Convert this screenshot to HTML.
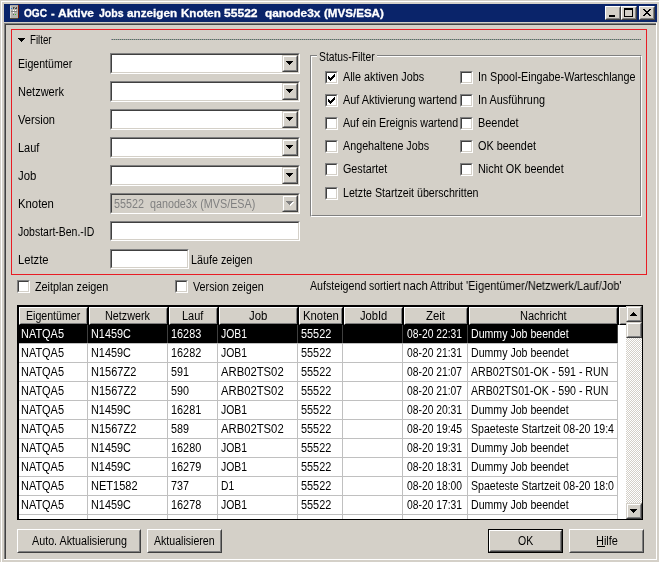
<!DOCTYPE html><html><head><meta charset="utf-8"><title>OGC</title><style>
*{box-sizing:border-box;margin:0;padding:0}
html,body{width:659px;height:562px;overflow:hidden;background:#d4d0c8}
body{position:relative;font-family:"Liberation Sans",sans-serif;font-size:12px;color:#000;line-height:13px}
.a{position:absolute}
.t{position:absolute;white-space:pre;transform-origin:0 0;line-height:13px;height:13px}
.sunk{position:absolute;background:#fff;border:1px solid;border-color:#808080 #fff #fff #808080}
.sunk:before{content:"";position:absolute;left:0;top:0;right:0;bottom:0;border:1px solid;border-color:#404040 #d4d0c8 #d4d0c8 #404040}
.cbtn{position:absolute;right:1px;top:1px;width:16px;height:17px;background:#d4d0c8;border:1px solid;border-color:#d4d0c8 #404040 #404040 #d4d0c8}
.cbtn:before{content:"";position:absolute;left:0;top:0;right:0;bottom:0;border:1px solid;border-color:#fff #808080 #808080 #fff}
.btn{position:absolute;background:#d4d0c8;border:1px solid;border-color:#fff #404040 #404040 #fff}
.btn:before{content:"";position:absolute;left:0;top:0;right:0;bottom:0;border:1px solid;border-color:#d4d0c8 #808080 #808080 #d4d0c8}
.hd{position:absolute;top:307px;height:18px;background:#d4d0c8;border:1px solid;border-color:#fff #000 #000 #fff}
.hd:before{content:"";position:absolute;left:0;top:0;right:0;bottom:0;border:1px solid;border-color:#d4d0c8 #808080 #808080 #d4d0c8}
.sb{position:absolute;left:626px;width:16px;height:16px;background:#d4d0c8;border:1px solid;border-color:#d4d0c8 #404040 #404040 #d4d0c8}
.sb:before{content:"";position:absolute;left:0;top:0;right:0;bottom:0;border:1px solid;border-color:#fff #808080 #808080 #fff}
</style></head><body><div id="w" style="position:absolute;left:0;top:0;width:659px;height:562px;will-change:transform">
<div class="a" style="left:1px;top:1px;width:658px;height:1px;background:#fff"></div>
<div class="a" style="left:1px;top:1px;width:1px;height:561px;background:#fff"></div>
<div class="a" style="left:4px;top:4px;width:653px;height:18px;background:#0a246a"></div>
<svg class="a" style="left:10px;top:5px" width="9" height="14" viewBox="0 0 9 14" shape-rendering="crispEdges"><rect width="8" height="13" fill="#b4b2ae"/><rect width="1" height="13" fill="#d8d6d2"/><rect width="8" height="1" fill="#a8a6a2"/><rect x="8" width="1" height="13" fill="#7a1c08"/><rect y="13" width="8" height="1" fill="#50483c"/><rect x="1" y="3" width="1" height="1" fill="#1c7ce0"/><rect x="3" y="2" width="1" height="2" fill="#484848"/><rect x="5" y="3" width="1" height="1" fill="#484848"/><rect x="6" y="2" width="1" height="2" fill="#484848"/><rect x="4" y="2" width="1" height="1" fill="#787878"/><rect x="3" y="5" width="1" height="1" fill="#fff"/><rect x="5" y="5" width="1" height="1" fill="#fff"/><rect x="1" y="6" width="6" height="1" fill="#808080"/><rect x="3" y="7" width="1" height="1" fill="#fff"/><rect x="3" y="9" width="1" height="1" fill="#606060"/><rect x="5" y="9" width="1" height="1" fill="#30d020"/></svg>
<div class="t" style="left:24.00px;top:7px;color:#fff;font-size:11px;font-weight:bold;-webkit-text-stroke:0.3px;transform:scaleX(0.9200);">OGC</div>
<div class="t" style="left:51.00px;top:7px;color:#fff;font-size:11px;font-weight:bold;-webkit-text-stroke:0.3px;transform:scaleX(1.0000);">-</div>
<div class="t" style="left:58.00px;top:7px;color:#fff;font-size:11px;font-weight:bold;-webkit-text-stroke:0.3px;transform:scaleX(1.0909);">Aktive</div>
<div class="t" style="left:99.00px;top:7px;color:#fff;font-size:11px;font-weight:bold;-webkit-text-stroke:0.3px;transform:scaleX(0.9600);">Jobs</div>
<div class="t" style="left:127.00px;top:7px;color:#fff;font-size:11px;font-weight:bold;-webkit-text-stroke:0.3px;transform:scaleX(1.0638);">anzeigen</div>
<div class="t" style="left:181.00px;top:7px;color:#fff;font-size:11px;font-weight:bold;-webkit-text-stroke:0.3px;transform:scaleX(1.0526);">Knoten</div>
<div class="t" style="left:224.00px;top:7px;color:#fff;font-size:11px;font-weight:bold;-webkit-text-stroke:0.3px;transform:scaleX(1.0968);">55522</div>
<div class="t" style="left:265.00px;top:7px;color:#fff;font-size:11px;font-weight:bold;-webkit-text-stroke:0.3px;transform:scaleX(1.0784);">qanode3x</div>
<div class="t" style="left:324.00px;top:7px;color:#fff;font-size:11px;font-weight:bold;-webkit-text-stroke:0.3px;transform:scaleX(1.0526);">(MVS/ESA)</div>
<div class="btn" style="left:605px;top:6px;width:16px;height:14px"><div class="a" style="left:3px;top:8px;width:6px;height:2px;background:#000"></div></div>
<div class="btn" style="left:621px;top:6px;width:16px;height:14px"><div class="a" style="left:2px;top:1px;width:9px;height:9px;border:1px solid #000;border-top-width:2px"></div></div>
<div class="btn" style="left:639px;top:6px;width:16px;height:14px"><div class="a" style="left:3px;top:2px;width:1px;height:1px;background:#000"></div><div class="a" style="left:4px;top:2px;width:1px;height:1px;background:#000"></div><div class="a" style="left:9px;top:2px;width:1px;height:1px;background:#000"></div><div class="a" style="left:10px;top:2px;width:1px;height:1px;background:#000"></div><div class="a" style="left:4px;top:3px;width:1px;height:1px;background:#000"></div><div class="a" style="left:5px;top:3px;width:1px;height:1px;background:#000"></div><div class="a" style="left:8px;top:3px;width:1px;height:1px;background:#000"></div><div class="a" style="left:9px;top:3px;width:1px;height:1px;background:#000"></div><div class="a" style="left:5px;top:4px;width:1px;height:1px;background:#000"></div><div class="a" style="left:6px;top:4px;width:1px;height:1px;background:#000"></div><div class="a" style="left:7px;top:4px;width:1px;height:1px;background:#000"></div><div class="a" style="left:8px;top:4px;width:1px;height:1px;background:#000"></div><div class="a" style="left:6px;top:5px;width:1px;height:1px;background:#000"></div><div class="a" style="left:7px;top:5px;width:1px;height:1px;background:#000"></div><div class="a" style="left:5px;top:6px;width:1px;height:1px;background:#000"></div><div class="a" style="left:6px;top:6px;width:1px;height:1px;background:#000"></div><div class="a" style="left:7px;top:6px;width:1px;height:1px;background:#000"></div><div class="a" style="left:8px;top:6px;width:1px;height:1px;background:#000"></div><div class="a" style="left:4px;top:7px;width:1px;height:1px;background:#000"></div><div class="a" style="left:5px;top:7px;width:1px;height:1px;background:#000"></div><div class="a" style="left:8px;top:7px;width:1px;height:1px;background:#000"></div><div class="a" style="left:9px;top:7px;width:1px;height:1px;background:#000"></div><div class="a" style="left:3px;top:8px;width:1px;height:1px;background:#000"></div><div class="a" style="left:4px;top:8px;width:1px;height:1px;background:#000"></div><div class="a" style="left:9px;top:8px;width:1px;height:1px;background:#000"></div><div class="a" style="left:10px;top:8px;width:1px;height:1px;background:#000"></div></div>
<div class="a" style="left:4px;top:23px;width:652px;height:1px;background:#808080"></div>
<div class="a" style="left:4px;top:23px;width:1px;height:536px;background:#808080"></div>
<div class="a" style="left:5px;top:24px;width:651px;height:1px;background:#404040"></div>
<div class="a" style="left:5px;top:24px;width:1px;height:535px;background:#404040"></div>
<div class="a" style="left:656px;top:23px;width:1px;height:537px;background:#fff"></div>
<div class="a" style="left:4px;top:559px;width:653px;height:1px;background:#fff"></div>
<div class="a" style="left:11px;top:29px;width:636px;height:246px;border:1px solid #e81c24"></div>
<div class="a" style="left:18px;top:38px;width:7px;height:1px;background:#000"></div><div class="a" style="left:19px;top:39px;width:5px;height:1px;background:#000"></div><div class="a" style="left:20px;top:40px;width:3px;height:1px;background:#000"></div><div class="a" style="left:21px;top:41px;width:1px;height:1px;background:#000"></div>
<div class="t" style="left:30.19px;top:34px;color:#000;font-size:12px;transform:scaleX(0.8077);">Filter</div>
<div class="a" style="left:111px;top:39px;width:530px;height:1px;background:repeating-linear-gradient(90deg,#a884b0 0 1px,#4a8550 1px 2px)"></div>
<div class="t" style="left:18.12px;top:58px;color:#000;font-size:12px;transform:scaleX(0.8833);">Eigentümer</div>
<div class="t" style="left:18.08px;top:86px;color:#000;font-size:12px;transform:scaleX(0.9184);">Netzwerk</div>
<div class="t" style="left:18.00px;top:114px;color:#000;font-size:12px;transform:scaleX(0.9231);">Version</div>
<div class="t" style="left:18.09px;top:142px;color:#000;font-size:12px;transform:scaleX(0.9130);">Lauf</div>
<div class="t" style="left:18.00px;top:170px;color:#000;font-size:12px;transform:scaleX(0.9474);">Job</div>
<div class="t" style="left:18.06px;top:198px;color:#000;font-size:12px;transform:scaleX(0.9444);">Knoten</div>
<div class="t" style="left:18.00px;top:226px;color:#000;font-size:12px;transform:scaleX(0.8736);">Jobstart-Ben.-ID</div>
<div class="t" style="left:18.06px;top:254px;color:#000;font-size:12px;transform:scaleX(0.9355);">Letzte</div>
<div class="sunk" style="left:110px;top:53px;width:190px;height:21px;"><div class="cbtn"><div class="a" style="left:3px;top:5px;width:7px;height:1px;background:#000"></div><div class="a" style="left:4px;top:6px;width:5px;height:1px;background:#000"></div><div class="a" style="left:5px;top:7px;width:3px;height:1px;background:#000"></div><div class="a" style="left:6px;top:8px;width:1px;height:1px;background:#000"></div></div></div>
<div class="sunk" style="left:110px;top:81px;width:190px;height:21px;"><div class="cbtn"><div class="a" style="left:3px;top:5px;width:7px;height:1px;background:#000"></div><div class="a" style="left:4px;top:6px;width:5px;height:1px;background:#000"></div><div class="a" style="left:5px;top:7px;width:3px;height:1px;background:#000"></div><div class="a" style="left:6px;top:8px;width:1px;height:1px;background:#000"></div></div></div>
<div class="sunk" style="left:110px;top:109px;width:190px;height:21px;"><div class="cbtn"><div class="a" style="left:3px;top:5px;width:7px;height:1px;background:#000"></div><div class="a" style="left:4px;top:6px;width:5px;height:1px;background:#000"></div><div class="a" style="left:5px;top:7px;width:3px;height:1px;background:#000"></div><div class="a" style="left:6px;top:8px;width:1px;height:1px;background:#000"></div></div></div>
<div class="sunk" style="left:110px;top:137px;width:190px;height:21px;"><div class="cbtn"><div class="a" style="left:3px;top:5px;width:7px;height:1px;background:#000"></div><div class="a" style="left:4px;top:6px;width:5px;height:1px;background:#000"></div><div class="a" style="left:5px;top:7px;width:3px;height:1px;background:#000"></div><div class="a" style="left:6px;top:8px;width:1px;height:1px;background:#000"></div></div></div>
<div class="sunk" style="left:110px;top:165px;width:190px;height:21px;"><div class="cbtn"><div class="a" style="left:3px;top:5px;width:7px;height:1px;background:#000"></div><div class="a" style="left:4px;top:6px;width:5px;height:1px;background:#000"></div><div class="a" style="left:5px;top:7px;width:3px;height:1px;background:#000"></div><div class="a" style="left:6px;top:8px;width:1px;height:1px;background:#000"></div></div></div>
<div class="sunk" style="left:110px;top:193px;width:190px;height:21px;background:#d4d0c8"><div class="cbtn"><div class="a" style="left:4px;top:6px;width:7px;height:1px;background:#fff"></div><div class="a" style="left:5px;top:7px;width:5px;height:1px;background:#fff"></div><div class="a" style="left:6px;top:8px;width:3px;height:1px;background:#fff"></div><div class="a" style="left:7px;top:9px;width:1px;height:1px;background:#fff"></div><div class="a" style="left:3px;top:5px;width:7px;height:1px;background:#808080"></div><div class="a" style="left:4px;top:6px;width:5px;height:1px;background:#808080"></div><div class="a" style="left:5px;top:7px;width:3px;height:1px;background:#808080"></div><div class="a" style="left:6px;top:8px;width:1px;height:1px;background:#808080"></div></div></div>
<div class="t" style="left:114.10px;top:198px;color:#808080;font-size:12px;transform:scaleX(0.8974);">55522  qanode3x (MVS/ESA)</div>
<div class="sunk" style="left:110px;top:221px;width:190px;height:20px"></div>
<div class="sunk" style="left:110px;top:249px;width:79px;height:20px"></div>
<div class="t" style="left:191.10px;top:254px;color:#000;font-size:12px;transform:scaleX(0.8955);">Läufe zeigen</div>
<div class="a" style="left:310px;top:55px;width:332px;height:162px;border:1px solid;border-color:#808080 #fff #fff #808080"></div>
<div class="a" style="left:311px;top:56px;width:330px;height:160px;border:1px solid;border-color:#fff #808080 #808080 #fff"></div>
<div class="a" style="left:317px;top:55px;width:60px;height:2px;background:#d4d0c8"></div>
<div class="t" style="left:319.14px;top:51px;color:#000;font-size:12px;transform:scaleX(0.8594);">Status-Filter</div>
<div class="sunk" style="left:325px;top:71px;width:13px;height:13px"><div class="a" style="left:2px;top:4px;width:1px;height:3px;background:#000"></div><div class="a" style="left:3px;top:5px;width:1px;height:3px;background:#000"></div><div class="a" style="left:4px;top:6px;width:1px;height:3px;background:#000"></div><div class="a" style="left:5px;top:5px;width:1px;height:3px;background:#000"></div><div class="a" style="left:6px;top:4px;width:1px;height:3px;background:#000"></div><div class="a" style="left:7px;top:3px;width:1px;height:3px;background:#000"></div><div class="a" style="left:8px;top:2px;width:1px;height:3px;background:#000"></div></div>
<div class="t" style="left:343.00px;top:71px;color:#000;font-size:12px;transform:scaleX(0.9000);">Alle aktiven Jobs</div>
<div class="sunk" style="left:325px;top:94px;width:13px;height:13px"><div class="a" style="left:2px;top:4px;width:1px;height:3px;background:#000"></div><div class="a" style="left:3px;top:5px;width:1px;height:3px;background:#000"></div><div class="a" style="left:4px;top:6px;width:1px;height:3px;background:#000"></div><div class="a" style="left:5px;top:5px;width:1px;height:3px;background:#000"></div><div class="a" style="left:6px;top:4px;width:1px;height:3px;background:#000"></div><div class="a" style="left:7px;top:3px;width:1px;height:3px;background:#000"></div><div class="a" style="left:8px;top:2px;width:1px;height:3px;background:#000"></div></div>
<div class="t" style="left:343.00px;top:94px;color:#000;font-size:12px;transform:scaleX(0.9048);">Auf Aktivierung wartend</div>
<div class="sunk" style="left:325px;top:117px;width:13px;height:13px"></div>
<div class="t" style="left:343.00px;top:117px;color:#000;font-size:12px;transform:scaleX(0.8846);">Auf ein Ereignis wartend</div>
<div class="sunk" style="left:325px;top:140px;width:13px;height:13px"></div>
<div class="t" style="left:343.00px;top:140px;color:#000;font-size:12px;transform:scaleX(0.8958);">Angehaltene Jobs</div>
<div class="sunk" style="left:325px;top:163px;width:13px;height:13px"></div>
<div class="t" style="left:343.10px;top:163px;color:#000;font-size:12px;transform:scaleX(0.8958);">Gestartet</div>
<div class="sunk" style="left:325px;top:187px;width:13px;height:13px"></div>
<div class="t" style="left:343.11px;top:187px;color:#000;font-size:12px;transform:scaleX(0.8874);">Letzte Startzeit überschritten</div>
<div class="sunk" style="left:460px;top:71px;width:13px;height:13px"></div>
<div class="t" style="left:478.10px;top:71px;color:#000;font-size:12px;transform:scaleX(0.8966);">In Spool-Eingabe-Warteschlange</div>
<div class="sunk" style="left:460px;top:94px;width:13px;height:13px"></div>
<div class="t" style="left:478.10px;top:94px;color:#000;font-size:12px;transform:scaleX(0.9041);">In Ausführung</div>
<div class="sunk" style="left:460px;top:117px;width:13px;height:13px"></div>
<div class="t" style="left:478.09px;top:117px;color:#000;font-size:12px;transform:scaleX(0.9091);">Beendet</div>
<div class="sunk" style="left:460px;top:140px;width:13px;height:13px"></div>
<div class="t" style="left:478.10px;top:140px;color:#000;font-size:12px;transform:scaleX(0.9048);">OK beendet</div>
<div class="sunk" style="left:460px;top:163px;width:13px;height:13px"></div>
<div class="t" style="left:478.10px;top:163px;color:#000;font-size:12px;transform:scaleX(0.9043);">Nicht OK beendet</div>
<div class="sunk" style="left:17px;top:280px;width:13px;height:13px"></div>
<div class="t" style="left:35.00px;top:281px;color:#000;font-size:12px;transform:scaleX(0.9012);">Zeitplan zeigen</div>
<div class="sunk" style="left:175px;top:280px;width:13px;height:13px"></div>
<div class="t" style="left:193.00px;top:281px;color:#000;font-size:12px;transform:scaleX(0.8974);">Version zeigen</div>
<div class="t" style="left:310.00px;top:280px;color:#000;font-size:12px;transform:scaleX(0.8889);">Aufsteigend</div>
<div class="t" style="left:369.14px;top:280px;color:#000;font-size:12px;transform:scaleX(0.8611);">sortiert</div>
<div class="t" style="left:403.04px;top:280px;color:#000;font-size:12px;transform:scaleX(0.9583);">nach</div>
<div class="t" style="left:430.00px;top:280px;color:#000;font-size:12px;transform:scaleX(0.8684);">Attribut</div>
<div class="t" style="left:466.08px;top:280px;color:#000;font-size:12px;transform:scaleX(0.9222);">&#x27;Eigentümer/Netzwerk/Lauf/Job&#x27;</div>
<div class="a" style="left:17px;top:305px;width:626px;height:215px;background:#000"></div>
<div class="a" style="left:19px;top:307px;width:607px;height:212px;background:#fff"></div>
<div class="a" style="left:19px;top:307px;width:607px;height:18px;background:#000"></div>
<div class="hd" style="left:19px;width:69px"></div>
<div class="t" style="left:26.12px;top:310px;color:#000;font-size:12px;transform:scaleX(0.8833);">Eigentümer</div>
<div class="hd" style="left:89px;width:79px"></div>
<div class="t" style="left:105.10px;top:310px;color:#000;font-size:12px;transform:scaleX(0.8980);">Netzwerk</div>
<div class="hd" style="left:169px;width:49px"></div>
<div class="t" style="left:182.09px;top:310px;color:#000;font-size:12px;transform:scaleX(0.9130);">Lauf</div>
<div class="hd" style="left:219px;width:79px"></div>
<div class="t" style="left:249.00px;top:310px;color:#000;font-size:12px;transform:scaleX(0.9474);">Job</div>
<div class="hd" style="left:299px;width:44px"></div>
<div class="t" style="left:303.06px;top:310px;color:#000;font-size:12px;transform:scaleX(0.9444);">Knoten</div>
<div class="hd" style="left:344px;width:59px"></div>
<div class="t" style="left:360.00px;top:310px;color:#000;font-size:12px;transform:scaleX(0.9310);">JobId</div>
<div class="hd" style="left:404px;width:64px"></div>
<div class="t" style="left:426.00px;top:310px;color:#000;font-size:12px;transform:scaleX(0.9500);">Zeit</div>
<div class="hd" style="left:469px;width:149px"></div>
<div class="t" style="left:520.08px;top:310px;color:#000;font-size:12px;transform:scaleX(0.9200);">Nachricht</div>
<div class="hd" style="left:619px;width:9px"></div>
<div class="a" style="left:19px;top:325px;width:599px;height:18px;background:#000"></div>
<div class="a" style="left:19px;top:343px;width:599px;height:1px;background:#c0c0c0"></div>
<div class="t" style="left:21.09px;top:328px;color:#fff;font-size:12px;transform:scaleX(0.9130);">NATQA5</div>
<div class="t" style="left:91.10px;top:328px;color:#fff;font-size:12px;transform:scaleX(0.9048);">N1459C</div>
<div class="t" style="left:171.09px;top:328px;color:#fff;font-size:12px;transform:scaleX(0.9062);">16283</div>
<div class="t" style="left:221.00px;top:328px;color:#fff;font-size:12px;transform:scaleX(0.8667);">JOB1</div>
<div class="t" style="left:301.09px;top:328px;color:#fff;font-size:12px;transform:scaleX(0.9062);">55522</div>
<div class="t" style="left:407.00px;top:328px;color:#fff;font-size:12px;transform:scaleX(0.8594);">08-20 22:31</div>
<div class="t" style="left:471.12px;top:328px;color:#fff;font-size:12px;transform:scaleX(0.8818);">Dummy Job beendet</div>
<div class="a" style="left:19px;top:362px;width:599px;height:1px;background:#c0c0c0"></div>
<div class="t" style="left:21.09px;top:347px;color:#000;font-size:12px;transform:scaleX(0.9130);">NATQA5</div>
<div class="t" style="left:91.10px;top:347px;color:#000;font-size:12px;transform:scaleX(0.9048);">N1459C</div>
<div class="t" style="left:171.09px;top:347px;color:#000;font-size:12px;transform:scaleX(0.9062);">16282</div>
<div class="t" style="left:221.00px;top:347px;color:#000;font-size:12px;transform:scaleX(0.8667);">JOB1</div>
<div class="t" style="left:301.09px;top:347px;color:#000;font-size:12px;transform:scaleX(0.9062);">55522</div>
<div class="t" style="left:407.00px;top:347px;color:#000;font-size:12px;transform:scaleX(0.8594);">08-20 21:31</div>
<div class="t" style="left:471.12px;top:347px;color:#000;font-size:12px;transform:scaleX(0.8818);">Dummy Job beendet</div>
<div class="a" style="left:19px;top:381px;width:599px;height:1px;background:#c0c0c0"></div>
<div class="t" style="left:21.09px;top:366px;color:#000;font-size:12px;transform:scaleX(0.9130);">NATQA5</div>
<div class="t" style="left:91.08px;top:366px;color:#000;font-size:12px;transform:scaleX(0.9167);">N1567Z2</div>
<div class="t" style="left:171.11px;top:366px;color:#000;font-size:12px;transform:scaleX(0.8947);">591</div>
<div class="t" style="left:221.00px;top:366px;color:#000;font-size:12px;transform:scaleX(0.9394);">ARB02TS02</div>
<div class="t" style="left:301.09px;top:366px;color:#000;font-size:12px;transform:scaleX(0.9062);">55522</div>
<div class="t" style="left:407.00px;top:366px;color:#000;font-size:12px;transform:scaleX(0.8594);">08-20 21:07</div>
<div class="t" style="left:471.00px;top:366px;color:#000;font-size:12px;transform:scaleX(0.8839);">ARB02TS01-OK - 591 - RUN</div>
<div class="a" style="left:19px;top:400px;width:599px;height:1px;background:#c0c0c0"></div>
<div class="t" style="left:21.09px;top:385px;color:#000;font-size:12px;transform:scaleX(0.9130);">NATQA5</div>
<div class="t" style="left:91.08px;top:385px;color:#000;font-size:12px;transform:scaleX(0.9167);">N1567Z2</div>
<div class="t" style="left:171.11px;top:385px;color:#000;font-size:12px;transform:scaleX(0.8947);">590</div>
<div class="t" style="left:221.00px;top:385px;color:#000;font-size:12px;transform:scaleX(0.9394);">ARB02TS02</div>
<div class="t" style="left:301.09px;top:385px;color:#000;font-size:12px;transform:scaleX(0.9062);">55522</div>
<div class="t" style="left:407.00px;top:385px;color:#000;font-size:12px;transform:scaleX(0.8594);">08-20 21:07</div>
<div class="t" style="left:471.00px;top:385px;color:#000;font-size:12px;transform:scaleX(0.8839);">ARB02TS01-OK - 590 - RUN</div>
<div class="a" style="left:19px;top:419px;width:599px;height:1px;background:#c0c0c0"></div>
<div class="t" style="left:21.09px;top:404px;color:#000;font-size:12px;transform:scaleX(0.9130);">NATQA5</div>
<div class="t" style="left:91.10px;top:404px;color:#000;font-size:12px;transform:scaleX(0.9048);">N1459C</div>
<div class="t" style="left:171.09px;top:404px;color:#000;font-size:12px;transform:scaleX(0.9062);">16281</div>
<div class="t" style="left:221.00px;top:404px;color:#000;font-size:12px;transform:scaleX(0.8667);">JOB1</div>
<div class="t" style="left:301.09px;top:404px;color:#000;font-size:12px;transform:scaleX(0.9062);">55522</div>
<div class="t" style="left:407.00px;top:404px;color:#000;font-size:12px;transform:scaleX(0.8594);">08-20 20:31</div>
<div class="t" style="left:471.12px;top:404px;color:#000;font-size:12px;transform:scaleX(0.8818);">Dummy Job beendet</div>
<div class="a" style="left:19px;top:438px;width:599px;height:1px;background:#c0c0c0"></div>
<div class="t" style="left:21.09px;top:423px;color:#000;font-size:12px;transform:scaleX(0.9130);">NATQA5</div>
<div class="t" style="left:91.08px;top:423px;color:#000;font-size:12px;transform:scaleX(0.9167);">N1567Z2</div>
<div class="t" style="left:171.11px;top:423px;color:#000;font-size:12px;transform:scaleX(0.8947);">589</div>
<div class="t" style="left:221.00px;top:423px;color:#000;font-size:12px;transform:scaleX(0.9394);">ARB02TS02</div>
<div class="t" style="left:301.09px;top:423px;color:#000;font-size:12px;transform:scaleX(0.9062);">55522</div>
<div class="t" style="left:407.00px;top:423px;color:#000;font-size:12px;transform:scaleX(0.8594);">08-20 19:45</div>
<div class="t" style="left:471.12px;top:423px;color:#000;font-size:12px;transform:scaleX(0.8820);">Spaeteste Startzeit 08-20 19:4</div>
<div class="a" style="left:19px;top:457px;width:599px;height:1px;background:#c0c0c0"></div>
<div class="t" style="left:21.09px;top:442px;color:#000;font-size:12px;transform:scaleX(0.9130);">NATQA5</div>
<div class="t" style="left:91.10px;top:442px;color:#000;font-size:12px;transform:scaleX(0.9048);">N1459C</div>
<div class="t" style="left:171.09px;top:442px;color:#000;font-size:12px;transform:scaleX(0.9062);">16280</div>
<div class="t" style="left:221.00px;top:442px;color:#000;font-size:12px;transform:scaleX(0.8667);">JOB1</div>
<div class="t" style="left:301.09px;top:442px;color:#000;font-size:12px;transform:scaleX(0.9062);">55522</div>
<div class="t" style="left:407.00px;top:442px;color:#000;font-size:12px;transform:scaleX(0.8594);">08-20 19:31</div>
<div class="t" style="left:471.12px;top:442px;color:#000;font-size:12px;transform:scaleX(0.8818);">Dummy Job beendet</div>
<div class="a" style="left:19px;top:476px;width:599px;height:1px;background:#c0c0c0"></div>
<div class="t" style="left:21.09px;top:461px;color:#000;font-size:12px;transform:scaleX(0.9130);">NATQA5</div>
<div class="t" style="left:91.10px;top:461px;color:#000;font-size:12px;transform:scaleX(0.9048);">N1459C</div>
<div class="t" style="left:171.09px;top:461px;color:#000;font-size:12px;transform:scaleX(0.9062);">16279</div>
<div class="t" style="left:221.00px;top:461px;color:#000;font-size:12px;transform:scaleX(0.8667);">JOB1</div>
<div class="t" style="left:301.09px;top:461px;color:#000;font-size:12px;transform:scaleX(0.9062);">55522</div>
<div class="t" style="left:407.00px;top:461px;color:#000;font-size:12px;transform:scaleX(0.8594);">08-20 18:31</div>
<div class="t" style="left:471.12px;top:461px;color:#000;font-size:12px;transform:scaleX(0.8818);">Dummy Job beendet</div>
<div class="a" style="left:19px;top:495px;width:599px;height:1px;background:#c0c0c0"></div>
<div class="t" style="left:21.09px;top:480px;color:#000;font-size:12px;transform:scaleX(0.9130);">NATQA5</div>
<div class="t" style="left:91.08px;top:480px;color:#000;font-size:12px;transform:scaleX(0.9184);">NET1582</div>
<div class="t" style="left:171.11px;top:480px;color:#000;font-size:12px;transform:scaleX(0.8947);">737</div>
<div class="t" style="left:221.14px;top:480px;color:#000;font-size:12px;transform:scaleX(0.8571);">D1</div>
<div class="t" style="left:301.09px;top:480px;color:#000;font-size:12px;transform:scaleX(0.9062);">55522</div>
<div class="t" style="left:407.00px;top:480px;color:#000;font-size:12px;transform:scaleX(0.8594);">08-20 18:00</div>
<div class="t" style="left:471.12px;top:480px;color:#000;font-size:12px;transform:scaleX(0.8820);">Spaeteste Startzeit 08-20 18:0</div>
<div class="a" style="left:19px;top:514px;width:599px;height:1px;background:#c0c0c0"></div>
<div class="t" style="left:21.09px;top:499px;color:#000;font-size:12px;transform:scaleX(0.9130);">NATQA5</div>
<div class="t" style="left:91.10px;top:499px;color:#000;font-size:12px;transform:scaleX(0.9048);">N1459C</div>
<div class="t" style="left:171.09px;top:499px;color:#000;font-size:12px;transform:scaleX(0.9062);">16278</div>
<div class="t" style="left:221.00px;top:499px;color:#000;font-size:12px;transform:scaleX(0.8667);">JOB1</div>
<div class="t" style="left:301.09px;top:499px;color:#000;font-size:12px;transform:scaleX(0.9062);">55522</div>
<div class="t" style="left:407.00px;top:499px;color:#000;font-size:12px;transform:scaleX(0.8594);">08-20 17:31</div>
<div class="t" style="left:471.12px;top:499px;color:#000;font-size:12px;transform:scaleX(0.8818);">Dummy Job beendet</div>
<div class="a" style="left:87px;top:325px;width:1px;height:194px;background:#c0c0c0"></div>
<div class="a" style="left:87px;top:325px;width:1px;height:18px;background:#3f3f3f"></div>
<div class="a" style="left:167px;top:325px;width:1px;height:194px;background:#c0c0c0"></div>
<div class="a" style="left:167px;top:325px;width:1px;height:18px;background:#3f3f3f"></div>
<div class="a" style="left:217px;top:325px;width:1px;height:194px;background:#c0c0c0"></div>
<div class="a" style="left:217px;top:325px;width:1px;height:18px;background:#3f3f3f"></div>
<div class="a" style="left:297px;top:325px;width:1px;height:194px;background:#c0c0c0"></div>
<div class="a" style="left:297px;top:325px;width:1px;height:18px;background:#3f3f3f"></div>
<div class="a" style="left:342px;top:325px;width:1px;height:194px;background:#c0c0c0"></div>
<div class="a" style="left:342px;top:325px;width:1px;height:18px;background:#3f3f3f"></div>
<div class="a" style="left:402px;top:325px;width:1px;height:194px;background:#c0c0c0"></div>
<div class="a" style="left:402px;top:325px;width:1px;height:18px;background:#3f3f3f"></div>
<div class="a" style="left:467px;top:325px;width:1px;height:194px;background:#c0c0c0"></div>
<div class="a" style="left:467px;top:325px;width:1px;height:18px;background:#3f3f3f"></div>
<div class="a" style="left:617px;top:325px;width:1px;height:194px;background:#c0c0c0"></div>
<div class="a" style="left:617px;top:325px;width:1px;height:18px;background:#3f3f3f"></div>
<div class="a" style="left:626px;top:306px;width:16px;height:213px;background:#fff;background-image:conic-gradient(#d4d0c8 25%,#fff 0 50%,#d4d0c8 0 75%,#fff 0);background-size:2px 2px"></div>
<div class="sb" style="top:306px"><div class="a" style="left:6px;top:5px;width:1px;height:1px;background:#000"></div><div class="a" style="left:5px;top:6px;width:3px;height:1px;background:#000"></div><div class="a" style="left:4px;top:7px;width:5px;height:1px;background:#000"></div><div class="a" style="left:3px;top:8px;width:7px;height:1px;background:#000"></div></div>
<div class="sb" style="top:322px"></div>
<div class="sb" style="top:503px"><div class="a" style="left:3px;top:5px;width:7px;height:1px;background:#000"></div><div class="a" style="left:4px;top:6px;width:5px;height:1px;background:#000"></div><div class="a" style="left:5px;top:7px;width:3px;height:1px;background:#000"></div><div class="a" style="left:6px;top:8px;width:1px;height:1px;background:#000"></div></div>
<div class="btn" style="left:17px;top:529px;width:124px;height:24px"></div>
<div class="t" style="left:32.00px;top:535px;color:#000;font-size:12px;transform:scaleX(0.8962);">Auto. Aktualisierung</div>
<div class="btn" style="left:147px;top:529px;width:75px;height:24px"></div>
<div class="t" style="left:154.00px;top:535px;color:#000;font-size:12px;transform:scaleX(0.8824);">Aktualisieren</div>
<div class="a" style="left:488px;top:529px;width:75px;height:24px;background:#000"></div><div class="btn" style="left:489px;top:530px;width:73px;height:22px"></div>
<div class="t" style="left:518.12px;top:535px;color:#000;font-size:12px;transform:scaleX(0.8750);">OK</div>
<div class="btn" style="left:569px;top:529px;width:75px;height:24px"></div>
<div class="t" style="left:596.09px;top:535px;color:#000;font-size:12px;transform:scaleX(0.9130);">Hilfe</div>
<div class="a" style="left:597px;top:546px;width:8px;height:1px;background:#000"></div>
</div></body></html>
